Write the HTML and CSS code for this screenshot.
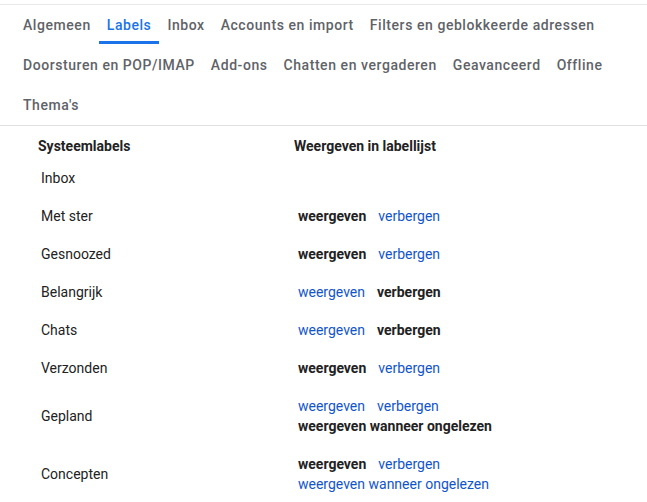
FILE: index.html
```html
<!DOCTYPE html>
<html lang="nl">
<head>
<meta charset="utf-8">
<title>Instellingen - Labels</title>
<link rel="stylesheet" href="styles.css">
</head>
<body>
<div class="settings">
  <nav class="tabs">
    <div class="tab-row">
      <a class="tab">Algemeen</a>
      <a class="tab active">Labels</a>
      <a class="tab">Inbox</a>
      <a class="tab">Accounts en import</a>
      <a class="tab">Filters en geblokkeerde adressen</a>
    </div>
    <div class="tab-row">
      <a class="tab">Doorsturen en POP/IMAP</a>
      <a class="tab">Add-ons</a>
      <a class="tab">Chatten en vergaderen</a>
      <a class="tab">Geavanceerd</a>
      <a class="tab">Offline</a>
    </div>
    <div class="tab-row">
      <a class="tab">Thema's</a>
    </div>
  </nav>

  <div class="labels">
    <div class="row head">
      <div class="col-name">Systeemlabels</div>
      <div class="col-act">Weergeven in labellijst</div>
    </div>
    <div class="row">
      <div class="col-name lbl">Inbox</div>
      <div class="col-act opts"></div>
    </div>
    <div class="row">
      <div class="col-name lbl">Met ster</div>
      <div class="col-act opts"><div class="line"><b class="sel">weergeven</b><a class="lnk">verbergen</a></div></div>
    </div>
    <div class="row">
      <div class="col-name lbl">Gesnoozed</div>
      <div class="col-act opts"><div class="line"><b class="sel">weergeven</b><a class="lnk">verbergen</a></div></div>
    </div>
    <div class="row">
      <div class="col-name lbl">Belangrijk</div>
      <div class="col-act opts"><div class="line"><a class="lnk">weergeven</a><b class="sel">verbergen</b></div></div>
    </div>
    <div class="row">
      <div class="col-name lbl">Chats</div>
      <div class="col-act opts"><div class="line"><a class="lnk">weergeven</a><b class="sel">verbergen</b></div></div>
    </div>
    <div class="row">
      <div class="col-name lbl">Verzonden</div>
      <div class="col-act opts"><div class="line"><b class="sel">weergeven</b><a class="lnk">verbergen</a></div></div>
    </div>
    <div class="row">
      <div class="col-name lbl">Gepland</div>
      <div class="col-act opts">
        <div class="line"><a class="lnk">weergeven</a><a class="lnk">verbergen</a></div>
        <div class="line"><b class="sel">weergeven wanneer ongelezen</b></div>
      </div>
    </div>
    <div class="row">
      <div class="col-name lbl">Concepten</div>
      <div class="col-act opts">
        <div class="line"><b class="sel">weergeven</b><a class="lnk">verbergen</a></div>
        <div class="line"><a class="lnk">weergeven wanneer ongelezen</a></div>
      </div>
    </div>
  </div>
</div>
</body>
</html>
```

FILE: styles.css
```css
html, body {
  margin: 0;
  padding: 0;
  background: #fff;
}

body {
  font-family: Roboto, "Liberation Sans", Arial, sans-serif;
  font-size: 14px;
  color: #202124;
}

.settings {
  margin-top: 4px;
  border-top: 1px solid #e8eaed;
}

.tabs {
  padding: 0 15px;
  border-bottom: 1px solid #e0e0e0;
}

.tab-row {
  display: flex;
  height: 40px;
}

.tab {
  position: relative;
  display: flex;
  align-items: center;
  padding: 0 8px;
  font-weight: 500;
  font-size: 14px;
  letter-spacing: 0.56px;
  color: #5f6368;
  white-space: nowrap;
  cursor: pointer;
}

.tab.active {
  color: #1a73e8;
}

.tab.active::after {
  content: "";
  position: absolute;
  left: 0;
  right: 0;
  bottom: 1px;
  height: 3px;
  background: #1a73e8;
}

.labels {
  padding: 0 0 0 38px;
}

.row {
  display: flex;
  align-items: center;
  padding: 9px 0;
}

.row.head {
  padding: 10px 0 3px;
  font-weight: 700;
  font-size: 14px;
  color: #222;
}

.col-name {
  width: 256px;
  line-height: 20px;
}

.col-name.lbl {
  padding-left: 3px;
  width: 253px;
  color: #222;
}

.col-act {
  line-height: 20px;
}

.opts {
  padding-left: 4px;
  min-height: 20px;
}

.line {
  display: flex;
  gap: 12px;
  white-space: nowrap;
}

.sel {
  font-weight: 700;
  color: #222;
}

.lnk {
  color: #1155cc;
  cursor: pointer;
}
```
